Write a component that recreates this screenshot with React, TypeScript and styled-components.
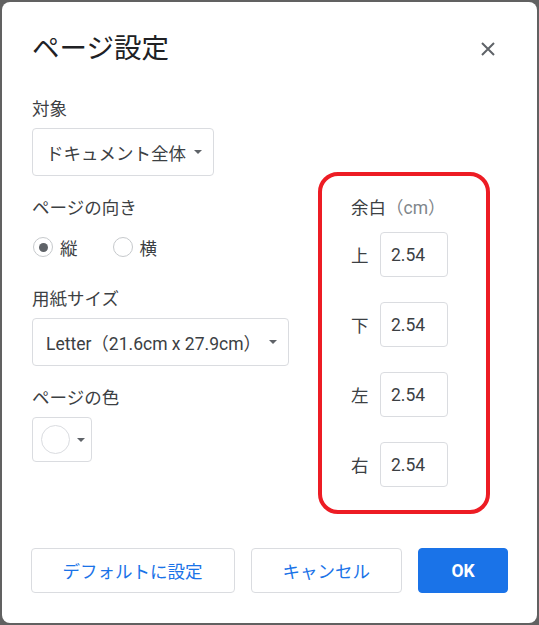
import React from 'react';
import styled, { createGlobalStyle } from 'styled-components';

const font = `Roboto, "Noto Sans CJK JP", "Noto Sans", sans-serif`;

const GlobalStyle = createGlobalStyle`
  html, body {
    margin: 0;
    padding: 0;
    background: #616161;
  }
  body {
    font-family: ${font};
  }
`;

const Dialog = styled.div`
  box-sizing: border-box;
  margin: 2px;
  width: 535px;
  height: 621px;
  background: #fff;
  border-radius: 8px;
  padding: 30px 29px 30px 30px;
  display: flex;
  flex-direction: column;
  color: #3c4043;
`;

const Header = styled.div`
  display: flex;
  align-items: center;
  justify-content: space-between;
  height: 34px;
  margin-bottom: 32px;
`;

const Title = styled.h1`
  margin: 0;
  font-size: 27.5px;
  font-weight: 400;
  line-height: 34px;
  color: #202124;
`;

const CloseButton = styled.button`
  width: 40px;
  height: 40px;
  border: none;
  background: none;
  padding: 0;
  display: flex;
  align-items: center;
  justify-content: center;
  color: #5f6368;
  cursor: pointer;
`;

const Body = styled.div`
  display: flex;
`;

const LeftColumn = styled.div`
  flex: 1;
  display: flex;
  flex-direction: column;
  gap: 21px;
`;

const Section = styled.div`
  display: flex;
  flex-direction: column;
  align-items: flex-start;
`;

const Label = styled.div`
  font-size: 17.5px;
  line-height: 22px;
  margin-bottom: 8px;
  color: #3c4043;
`;

const Unit = styled.span`
  color: #80868b;
`;

const SelectBox = styled.div`
  box-sizing: border-box;
  height: 48px;
  display: flex;
  align-items: center;
  gap: 8px;
  padding: 0 11px 0 13px;
  border: 1px solid #dadce0;
  border-radius: 4px;
  font-size: 17.5px;
  color: #3c4043;
  white-space: nowrap;
`;

const Arrow = styled.span`
  width: 0;
  height: 0;
  border-left: 4.5px solid transparent;
  border-right: 4.5px solid transparent;
  border-top: 4.5px solid #5f6368;
`;

const RadioRow = styled.div`
  display: flex;
  align-items: center;
  height: 40px;
`;

const RadioOption = styled.label`
  display: flex;
  align-items: center;
  gap: 7px;
  margin-right: 34px;
  font-size: 17.5px;
  color: #3c4043;
`;

const RadioCircle = styled.span<{ $checked?: boolean }>`
  box-sizing: border-box;
  width: 20px;
  height: 20px;
  margin-left: 1px;
  border-radius: 50%;
  border: 1.5px solid #c6c9cc;
  display: flex;
  align-items: center;
  justify-content: center;

  &::after {
    content: '';
    width: 9px;
    height: 9px;
    border-radius: 50%;
    background: ${(p) => (p.$checked ? '#5f6368' : 'transparent')};
  }
`;

const ColorButton = styled.div`
  box-sizing: border-box;
  width: 60px;
  height: 45px;
  border: 1px solid #dadce0;
  border-radius: 4px;
  display: flex;
  align-items: center;
  gap: 7px;
  padding-left: 8px;
`;

const Swatch = styled.span`
  box-sizing: border-box;
  width: 29px;
  height: 29px;
  border-radius: 50%;
  border: 1px solid #dadce0;
  background: #fff;
`;

const RightColumn = styled.div`
  position: relative;
  width: 157px;
  padding-top: 99px;
`;

const MarginTitle = styled(Label)`
  margin-bottom: 13px;
`;

const MarginList = styled.div`
  display: flex;
  flex-direction: column;
  gap: 25px;
`;

const MarginRow = styled.div`
  display: flex;
  align-items: center;
  gap: 11px;
`;

const MarginLabel = styled.span`
  width: 18px;
  font-size: 17.5px;
  color: #3c4043;
`;

const NumberInput = styled.div`
  box-sizing: border-box;
  width: 68px;
  height: 45px;
  border: 1px solid #dadce0;
  border-radius: 4px;
  display: flex;
  align-items: center;
  padding-left: 10px;
  font-size: 17.5px;
  color: #3c4043;
`;

// red annotation frame drawn over the margins block
const Highlight = styled.div`
  position: absolute;
  left: -33px;
  top: 74px;
  width: 172px;
  height: 342px;
  box-sizing: border-box;
  border: 4.5px solid #ed1c24;
  border-radius: 20px;
  pointer-events: none;
`;

const Footer = styled.div`
  margin-top: auto;
  display: flex;
  justify-content: flex-end;
  gap: 16px;
`;

const Button = styled.button<{ $primary?: boolean }>`
  flex-shrink: 0;
  white-space: nowrap;
  height: 45px;
  min-width: 90px;
  padding: 0 31px;
  border-radius: 4px;
  font-family: ${font};
  font-size: 17.5px;
  font-weight: ${(p) => (p.$primary ? 700 : 400)};
  border: 1px solid ${(p) => (p.$primary ? '#1a73e8' : '#dadce0')};
  background: ${(p) => (p.$primary ? '#1a73e8' : '#fff')};
  color: ${(p) => (p.$primary ? '#fff' : '#1a73e8')};
  cursor: pointer;
`;

const margins = [
  { side: '上', value: '2.54' },
  { side: '下', value: '2.54' },
  { side: '左', value: '2.54' },
  { side: '右', value: '2.54' },
];

export default function App() {
  return (
    <>
      <GlobalStyle />
      <Dialog>
        <Header>
          <Title>ページ設定</Title>
          <CloseButton aria-label="閉じる">
            <svg width="14" height="14" viewBox="0 0 14 14">
              <path d="M1 1L13 13M13 1L1 13" stroke="currentColor" strokeWidth="2" />
            </svg>
          </CloseButton>
        </Header>

        <Body>
          <LeftColumn>
            <Section>
              <Label>対象</Label>
              <SelectBox>
                ドキュメント全体
                <Arrow />
              </SelectBox>
            </Section>

            <Section>
              <Label>ページの向き</Label>
              <RadioRow>
                <RadioOption>
                  <RadioCircle $checked />縦
                </RadioOption>
                <RadioOption>
                  <RadioCircle />横
                </RadioOption>
              </RadioRow>
            </Section>

            <Section>
              <Label>用紙サイズ</Label>
              <SelectBox>
                Letter（21.6cm x 27.9cm）
                <Arrow />
              </SelectBox>
            </Section>

            <Section>
              <Label>ページの色</Label>
              <ColorButton>
                <Swatch />
                <Arrow />
              </ColorButton>
            </Section>
          </LeftColumn>

          <RightColumn>
            <MarginTitle>
              余白<Unit>（cm）</Unit>
            </MarginTitle>
            <MarginList>
              {margins.map((m) => (
                <MarginRow key={m.side}>
                  <MarginLabel>{m.side}</MarginLabel>
                  <NumberInput>{m.value}</NumberInput>
                </MarginRow>
              ))}
            </MarginList>
            <Highlight />
          </RightColumn>
        </Body>

        <Footer>
          <Button>デフォルトに設定</Button>
          <Button>キャンセル</Button>
          <Button $primary>OK</Button>
        </Footer>
      </Dialog>
    </>
  );
}
